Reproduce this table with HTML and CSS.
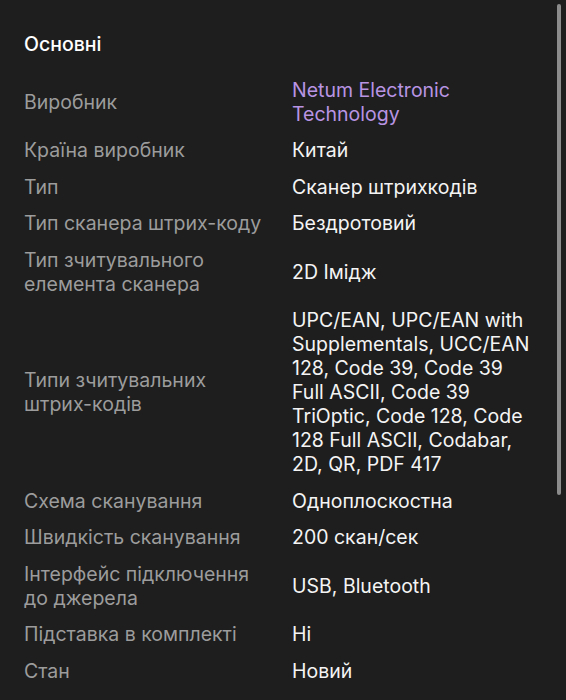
FILE: index.html
```html
<!DOCTYPE html>
<html lang="uk">
<head>
<meta charset="utf-8">
<link rel="stylesheet" href="styles.css">
</head>
<body>
<main class="panel">
  <h2 class="title">Основні</h2>
  <dl class="specs">
    <div class="row"><dt>Виробник</dt><dd class="link">Netum Electronic Technology</dd></div>
    <div class="row"><dt>Країна виробник</dt><dd>Китай</dd></div>
    <div class="row"><dt>Тип</dt><dd>Сканер штрихкодів</dd></div>
    <div class="row"><dt>Тип сканера штрих-коду</dt><dd>Бездротовий</dd></div>
    <div class="row"><dt>Тип зчитувального елемента сканера</dt><dd>2D Імідж</dd></div>
    <div class="row"><dt>Типи зчитувальних штрих-кодів</dt><dd>UPC/EAN, UPC/EAN with Supplementals, UCC/EAN 128, Code 39, Code 39 Full ASCII, Code 39 TriOptic, Code 128, Code 128 Full ASCII, Codabar, 2D, QR, PDF 417</dd></div>
    <div class="row"><dt>Схема сканування</dt><dd>Одноплоскостна</dd></div>
    <div class="row"><dt>Швидкість сканування</dt><dd>200 скан/сек</dd></div>
    <div class="row"><dt>Інтерфейс підключення до джерела</dt><dd>USB, Bluetooth</dd></div>
    <div class="row"><dt>Підставка в комплекті</dt><dd>Ні</dd></div>
    <div class="row"><dt>Стан</dt><dd>Новий</dd></div>
  </dl>
</main>
<div class="scrollbar"></div>
</body>
</html>
```

FILE: styles.css
```css
html, body {
  margin: 0;
  padding: 0;
  background: #1e1e1e;
  height: 100%;
  overflow: hidden;
}
body {
  font-family: Inter, "Noto Sans", sans-serif;
  font-size: 19.5px;
  line-height: 24px;
  color: #f4f4f4;
  position: relative;
}
.panel {
  padding: 32px 24px 0 24px;
}
.title {
  margin: 0 0 21.5px 0;
  font-size: 19.5px;
  font-weight: 500;
  line-height: 24px;
  color: #ffffff;
}
.specs {
  margin: 0;
  display: flex;
  flex-direction: column;
  gap: 12.5px;
}
.row {
  display: grid;
  grid-template-columns: 268px 244px;
  align-items: center;
}
dt {
  color: #9c9c9c;
  margin: 0;
  padding-right: 14px;
}
dd {
  margin: 0;
  color: #f4f4f4;
}
dd.link {
  color: #b894e3;
}
.scrollbar {
  position: absolute;
  left: 557px;
  top: 4px;
  width: 4px;
  height: 491px;
  border-radius: 2px;
  background: #8c8c8c;
}
```
